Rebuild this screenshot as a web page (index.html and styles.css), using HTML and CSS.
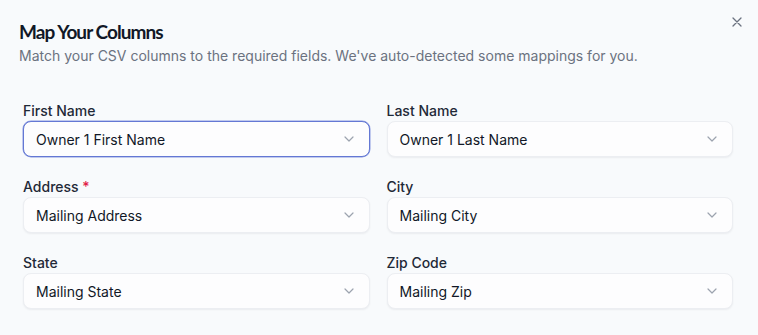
FILE: index.html
```html
<!DOCTYPE html>
<html lang="en">
<head>
<meta charset="utf-8">
<link rel="stylesheet" href="styles.css">
</head>
<body>
<div class="dialog">
  <button class="close" aria-label="Close">
    <svg width="10" height="10" viewBox="0 0 10 10"><path d="M1 1 L9 9 M9 1 L1 9" stroke="#6b7280" stroke-width="1.3" stroke-linecap="round" fill="none"/></svg>
  </button>
  <h1 class="title">Map Your Columns</h1>
  <p class="subtitle">Match your CSV columns to the required fields. We've auto-detected some mappings for you.</p>
  <div class="grid">
    <div class="field">
      <label class="label">First Name</label>
      <div class="select focused"><span>Owner 1 First Name</span><svg class="chev" width="10" height="6" viewBox="0 0 10 6"><path d="M1 1 L5 5 L9 1" stroke="#9ca3af" stroke-width="1.2" fill="none" stroke-linecap="round" stroke-linejoin="round"/></svg></div>
    </div>
    <div class="field">
      <label class="label">Last Name</label>
      <div class="select"><span>Owner 1 Last Name</span><svg class="chev" width="10" height="6" viewBox="0 0 10 6"><path d="M1 1 L5 5 L9 1" stroke="#9ca3af" stroke-width="1.2" fill="none" stroke-linecap="round" stroke-linejoin="round"/></svg></div>
    </div>
    <div class="field">
      <label class="label">Address <span class="req">*</span></label>
      <div class="select"><span>Mailing Address</span><svg class="chev" width="10" height="6" viewBox="0 0 10 6"><path d="M1 1 L5 5 L9 1" stroke="#9ca3af" stroke-width="1.2" fill="none" stroke-linecap="round" stroke-linejoin="round"/></svg></div>
    </div>
    <div class="field">
      <label class="label">City</label>
      <div class="select"><span>Mailing City</span><svg class="chev" width="10" height="6" viewBox="0 0 10 6"><path d="M1 1 L5 5 L9 1" stroke="#9ca3af" stroke-width="1.2" fill="none" stroke-linecap="round" stroke-linejoin="round"/></svg></div>
    </div>
    <div class="field">
      <label class="label">State</label>
      <div class="select"><span>Mailing State</span><svg class="chev" width="10" height="6" viewBox="0 0 10 6"><path d="M1 1 L5 5 L9 1" stroke="#9ca3af" stroke-width="1.2" fill="none" stroke-linecap="round" stroke-linejoin="round"/></svg></div>
    </div>
    <div class="field">
      <label class="label">Zip Code</label>
      <div class="select"><span>Mailing Zip</span><svg class="chev" width="10" height="6" viewBox="0 0 10 6"><path d="M1 1 L5 5 L9 1" stroke="#9ca3af" stroke-width="1.2" fill="none" stroke-linecap="round" stroke-linejoin="round"/></svg></div>
    </div>
  </div>
</div>
</body>
</html>
```
FILE: styles.css
```css
html, body {
  margin: 0;
  padding: 0;
  background: #f8fafc;
}
body {
  font-family: Inter, "Noto Sans", sans-serif;
  width: 758px;
  height: 335px;
  overflow: hidden;
}
.dialog {
  position: relative;
  padding: 18px 25px 0 19px;
}
.close {
  position: absolute;
  top: 17px;
  right: 16px;
  width: 10px;
  height: 10px;
  padding: 0;
  border: 0;
  background: none;
  display: flex;
}
.title {
  margin: 0;
  font-family: Lato, Inter, sans-serif;
  font-size: 19px;
  line-height: 28px;
  font-weight: 700;
  letter-spacing: -0.95px;
  color: #111827;
}
.subtitle {
  margin: 0;
  font-size: 14px;
  line-height: 20px;
  color: #6b7280;
}
.grid {
  margin: 35px 0 0 4px;
  display: grid;
  grid-template-columns: 1fr 1fr;
  column-gap: 17px;
  row-gap: 20px;
}
.field {
  display: flex;
  flex-direction: column;
  gap: 0;
}
.label {
  font-size: 14px;
  line-height: 20px;
  font-weight: 500;
  color: #1f2937;
}
.req {
  color: #e11d48;
}
.select {
  height: 36px;
  box-sizing: border-box;
  border: 1px solid #eceef2;
  border-radius: 8px;
  background: #fdfdfe;
  box-shadow: 0 1px 2px rgba(15, 23, 42, 0.06);
  display: flex;
  align-items: center;
  justify-content: space-between;
  padding: 0 15px 0 12px;
  font-size: 14px;
  color: #111827;
}
.select.focused {
  border-color: #6478d4;
  box-shadow: 0 0 0 0.5px #8a9ae0;
}
.chev {
  flex: none;
}
```
